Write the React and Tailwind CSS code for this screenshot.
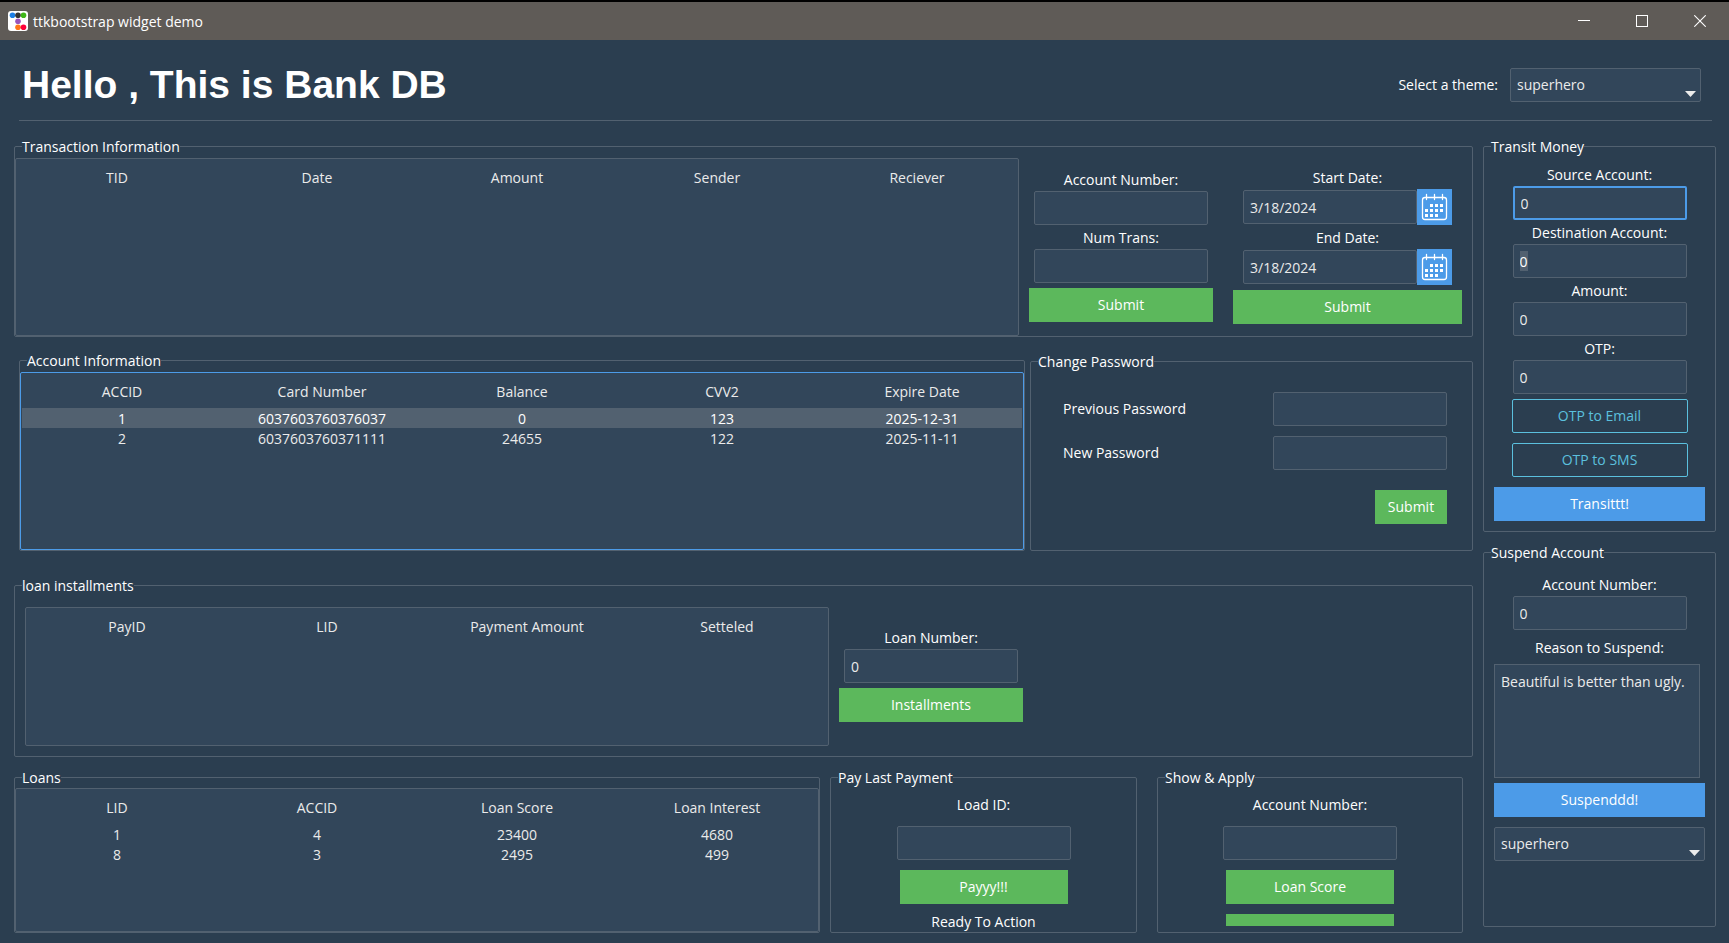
import React, { useId } from "react";

const BORDER = "border-[#526170]";

function Panel({ title, className = "", children }) {
  return (
    <fieldset className={`min-w-0 rounded-[2px] border ${BORDER} ${className}`}>
      <legend className="ml-[7px] h-5 leading-[22px] text-white">{title}</legend>
      {children}
    </fieldset>
  );
}

function Input({ className = "", ...props }) {
  return (
    <input
      className={`h-[34px] w-[174px] rounded-[2px] border bg-[#32465a] px-[6px] leading-5 text-[#ebebeb] outline-none ${className || BORDER}`}
      {...props}
    />
  );
}

function Field({ label, value = "", type = "text", inputClass, className = "gap-px" }) {
  const id = useId();
  return (
    <div className={`flex flex-col items-center ${className}`}>
      <label htmlFor={id} className="leading-5">{label}</label>
      <Input id={id} type={type} defaultValue={value} className={inputClass} />
    </div>
  );
}

function DateField({ label }) {
  const id = useId();
  return (
    <div className="flex flex-col items-center gap-px">
      <label htmlFor={id} className="leading-5">{label}</label>
      <div className="flex items-center">
        <Input id={id} type="text" defaultValue="3/18/2024" />
        <button type="button" aria-label={`Choose ${label}`} className="h-9 w-[35px] bg-[#4c9be8]">
          <CalendarIcon />
        </button>
      </div>
    </div>
  );
}

const DOTS = [
  [13, 15], [18, 15], [23, 15],
  [8, 20], [13, 20], [18, 20], [23, 20],
  [8, 25], [13, 25], [18, 25],
];

function CalendarIcon() {
  return (
    <svg width="35" height="36" viewBox="0 0 35 36" aria-hidden="true">
      <rect x="5.5" y="8.5" width="24" height="22" rx="2.5" fill="none" stroke="#fff" strokeWidth="1.3" />
      <path d="M9.5 5.5v5M17.5 5.5v5M25.5 5.5v5" stroke="#fff" strokeWidth="1.3" strokeLinecap="round" />
      {DOTS.map(([x, y]) => (
        <rect key={`${x}-${y}`} x={x} y={y} width="3" height="3" fill="#fff" />
      ))}
    </svg>
  );
}

function Button({ tone = "success", className = "", children, ...props }) {
  const tones = {
    success: "bg-[#5cb85c] text-white",
    primary: "bg-[#4c9be8] text-white",
    outline: "rounded-[2px] border border-[#5bc0de] text-[#5bc0de]",
  };
  return (
    <button type="button" className={`h-[34px] leading-5 ${tones[tone]} ${className}`} {...props}>
      {children}
    </button>
  );
}

function ThemeSelect({ className = "", ...props }) {
  return (
    <div className={`relative ${className}`}>
      <select
        defaultValue="superhero"
        className={`h-[34px] w-full appearance-none rounded-[2px] border bg-[#32465a] px-[6px] text-[#ebebeb] outline-none ${BORDER}`}
        {...props}
      >
        <option>superhero</option>
        <option>darkly</option>
        <option>flatly</option>
      </select>
      <svg className="pointer-events-none absolute right-[5px] bottom-[5px]" width="11" height="6" viewBox="0 0 11 6" aria-hidden="true">
        <path d="M0 0h11L5.5 6z" fill="#ebebeb" />
      </svg>
    </div>
  );
}

function DataTable({ label, columns, rows = [], selected = -1, className = "" }) {
  return (
    <div className={`min-w-0 rounded-[2px] border bg-[#32465a] p-px ${className}`}>
      <table aria-label={label} className="w-full table-fixed border-collapse text-center text-[#ebebeb]">
        <thead>
          <tr className="h-[34px]">
            {columns.map((c) => (
              <th key={c} scope="col" className="p-0 pt-[2px] font-normal">{c}</th>
            ))}
          </tr>
        </thead>
        <tbody>
          {rows.map((row, i) => (
            <tr key={row[0]} className={i === selected ? "h-5 bg-[#526170] text-white" : "h-5"}>
              {row.map((cell, j) => (
                <td key={j} className="p-0 pt-px leading-[19px]">{cell}</td>
              ))}
            </tr>
          ))}
        </tbody>
      </table>
    </div>
  );
}

function TitleBar() {
  return (
    <div className="flex h-10 items-center border-t-2 border-black bg-[#5f5b57]">
      <svg className="ml-2" width="20" height="20" viewBox="0 0 20 20" aria-hidden="true">
        <rect width="20" height="20" rx="3" fill="#fff" />
        <circle cx="4.5" cy="4.2" r="2.8" fill="#1d7fe6" />
        <circle cx="10" cy="4.2" r="2.8" fill="#333" />
        <circle cx="15.5" cy="4.2" r="2.8" fill="#3fb618" />
        <circle cx="10" cy="10.2" r="2.8" fill="#9954bb" />
        <circle cx="10" cy="16.2" r="2.8" fill="#ff7518" />
        <circle cx="15.5" cy="16.2" r="2.8" fill="#ff0039" />
      </svg>
      <span className="ml-[5px] pt-px leading-5">ttkbootstrap widget demo</span>
      <div className="ml-auto flex h-full">
        <button type="button" aria-label="Minimize" className="flex w-[58px] items-center justify-center">
          <svg width="12" height="12" viewBox="0 0 12 12"><path d="M0 5.5h12" stroke="#fff" /></svg>
        </button>
        <button type="button" aria-label="Maximize" className="flex w-[58px] items-center justify-center">
          <svg width="12" height="12" viewBox="0 0 12 12"><rect x=".5" y=".5" width="11" height="11" fill="none" stroke="#fff" /></svg>
        </button>
        <button type="button" aria-label="Close" className="flex w-[58px] items-center justify-center">
          <svg width="12" height="12" viewBox="0 0 12 12"><path d="M.3.3l11.4 11.4M11.7.3L.3 11.7" stroke="#fff" strokeWidth="1.1" /></svg>
        </button>
      </div>
    </div>
  );
}

export default function App() {
  return (
    <div className="min-h-screen bg-[#2b3e50] font-['Open_Sans',sans-serif] text-[14px] leading-5 text-white">
      <TitleBar />

      <header className="mr-[17px] ml-[19px] flex h-[81px] items-center justify-between border-b border-[#526170] pt-3 pr-[11px] pb-[2px] pl-[3px]">
        <h1 className="font-['Liberation_Sans',Arial,sans-serif] text-[39px] leading-[48px] font-bold">
          Hello , This is Bank DB
        </h1>
        <div className="flex items-center gap-3">
          <label htmlFor="theme">Select a theme:</label>
          <ThemeSelect id="theme" className="w-[191px]" />
        </div>
      </header>

      <div className="flex gap-[10px] pt-[15px] pr-[13px] pb-2 pl-[14px]">
        <main className="min-w-0 flex-1">
          <Panel title="Transaction Information">
            <div className="flex pt-[2px] pr-[10px]">
              <DataTable
                label="Transactions"
                columns={["TID", "Date", "Amount", "Sender", "Reciever"]}
                className={`h-[178px] flex-1 ${BORDER}`}
              />
              <form className="ml-[10px] flex w-[184px] flex-col pt-3">
                <Field label="Account Number:" />
                <Field label="Num Trans:" className="mt-[3px] gap-px" />
                <Button className="mt-[5px]">Submit</Button>
              </form>
              <form className="ml-5 flex w-[229px] flex-col pt-[10px]">
                <DateField label="Start Date:" />
                <div className="mt-[3px]">
                  <DateField label="End Date:" />
                </div>
                <Button className="mt-[5px]">Submit</Button>
              </form>
            </div>
          </Panel>

          <div className="mt-[13px] flex gap-[5px] pl-[5px]">
            <Panel title="Account Information" className="flex-1 pt-[2px]">
              <DataTable
                label="Accounts"
                columns={["ACCID", "Card Number", "Balance", "CVV2", "Expire Date"]}
                rows={[
                  ["1", "6037603760376037", "0", "123", "2025-12-31"],
                  ["2", "6037603760371111", "24655", "122", "2025-11-11"],
                ]}
                selected={0}
                className="h-[178px] border-[#4c9be8]"
              />
            </Panel>
            <Panel title="Change Password" className="mt-px w-[443px]">
              <form className="flex flex-col gap-[10px] pt-[21px] pr-[25px] pl-8">
                <div className="flex items-center justify-between">
                  <label htmlFor="prev-password">Previous Password</label>
                  <Input id="prev-password" type="password" />
                </div>
                <div className="flex items-center justify-between">
                  <label htmlFor="new-password">New Password</label>
                  <Input id="new-password" type="password" />
                </div>
                <Button className="mt-[10px] w-[72px] self-end">Submit</Button>
              </form>
            </Panel>
          </div>

          <Panel title="loan installments" className="mt-6">
            <div className="flex items-start pt-3 pb-[10px] pl-[10px]">
              <DataTable
                label="Loan installments"
                columns={["PayID", "LID", "Payment Amount", "Setteled"]}
                className={`h-[139px] w-[804px] ${BORDER}`}
              />
              <form className="ml-[10px] flex w-[184px] flex-col pt-[21px]">
                <Field label="Loan Number:" value="0" />
                <Button className="mt-[5px]">Installments</Button>
              </form>
            </div>
          </Panel>

          <div className="mt-[10px] flex pr-[10px]">
            <Panel title="Loans" className="flex-1 pt-px">
              <DataTable
                label="Loans"
                columns={["LID", "ACCID", "Loan Score", "Loan Interest"]}
                rows={[
                  ["1", "4", "23400", "4680"],
                  ["8", "3", "2495", "499"],
                ]}
                className={`h-[144px] ${BORDER}`}
              />
            </Panel>
            <Panel title="Pay Last Payment" className="ml-[10px] w-[307px]">
              <form className="flex flex-col items-center pt-2">
                <Field label="Load ID:" className="gap-[11px]" />
                <Button className="mt-[10px] w-[168px]">Payyy!!!</Button>
                <p className="mt-2">Ready To Action</p>
              </form>
            </Panel>
            <Panel title="Show & Apply" className="ml-5 w-[306px]">
              <form className="flex flex-col items-center pt-2">
                <Field label="Account Number:" className="gap-[11px]" />
                <Button className="mt-[10px] w-[168px]">Loan Score</Button>
                <button type="button" aria-label="Apply" className="mt-[10px] h-3 w-[168px] bg-[#5cb85c]" />
              </form>
            </Panel>
          </div>
        </main>

        <aside className="w-[233px] shrink-0">
          <Panel title="Transit Money">
            <form className="flex flex-col items-center gap-[3px] px-[10px] pt-[9px] pb-[10px]">
              <Field label="Source Account:" value="0" inputClass="border-2 border-[#4c9be8] px-[5px]" />
              <Field
                label="Destination Account:"
                value="0"
                inputClass="border-[#526170] text-white bg-[linear-gradient(#526170,#526170)] bg-[length:8px_20px] bg-[position:6px_6px] bg-no-repeat"
              />
              <Field label="Amount:" value="0" />
              <Field label="OTP:" value="0" />
              <Button tone="outline" className="mt-[2px] w-[176px]">OTP to Email</Button>
              <Button tone="outline" className="mt-[7px] w-[176px]">OTP to SMS</Button>
              <Button tone="primary" className="mt-[7px] w-full">Transittt!</Button>
            </form>
          </Panel>

          <Panel title="Suspend Account" className="mt-[10px]">
            <form className="flex flex-col items-center px-[10px] pt-[13px] pb-[65px]">
              <Field label="Account Number:" value="0" />
              <label htmlFor="reason" className="mt-2">Reason to Suspend:</label>
              <textarea
                id="reason"
                defaultValue="Beautiful is better than ugly."
                className={`mt-[6px] block h-[114px] w-[206px] resize-none self-start border bg-[#32465a] px-[6px] py-[7px] leading-5 text-[#ebebeb] outline-none ${BORDER}`}
              />
              <Button tone="primary" className="mt-[5px] w-full">Suspenddd!</Button>
              <ThemeSelect aria-label="Theme" className="mt-[10px] w-full" />
            </form>
          </Panel>
        </aside>
      </div>
    </div>
  );
}
